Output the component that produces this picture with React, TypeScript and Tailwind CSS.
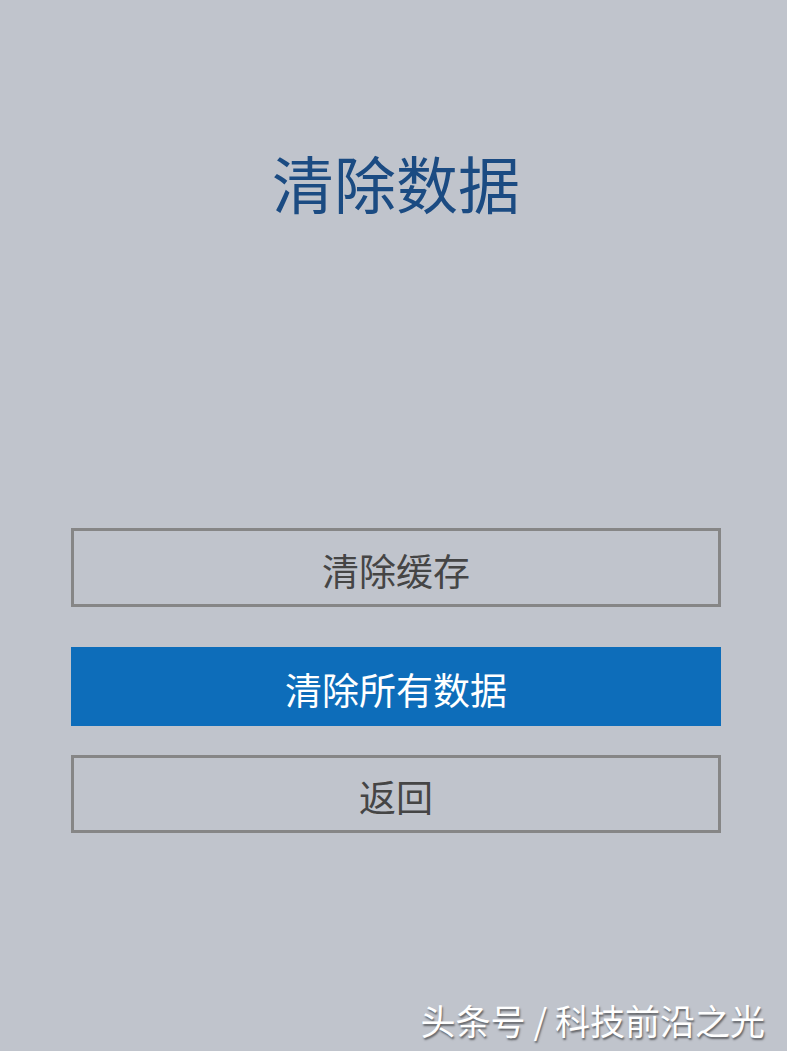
export default function App() {
  const font = { fontFamily: '"Noto Sans CJK SC", "Noto Sans", sans-serif' };
  return (
    <div className="relative w-[787px] h-[1051px] bg-[#c0c4cc] flex flex-col items-center overflow-hidden" style={font}>
      <h1 className="mt-[149px] ml-[5px] text-[62px] leading-[66px] text-[#1b4b82] font-normal">清除数据</h1>

      <div className="mt-[313px] ml-[5px] w-[650px] flex flex-col">
        <button className="h-[79px] pt-[6px] border-[3px] border-[#868686] text-[37px] text-[#454545] flex items-center justify-center">
          清除缓存
        </button>
        <button className="mt-[40px] h-[79px] pt-[6px] bg-[#0d6dba] text-[37px] text-white flex items-center justify-center">
          清除所有数据
        </button>
        <button className="mt-[29px] h-[78px] pt-[6px] border-[3px] border-[#868686] text-[37px] text-[#454545] flex items-center justify-center">
          返回
        </button>
      </div>

      <div className="absolute right-[22px] bottom-[10px] text-[35px] leading-[42px] text-white [text-shadow:1px_2px_2px_rgba(0,0,0,0.5)]">
        头条号 / 科技前沿之光
      </div>
    </div>
  );
}
